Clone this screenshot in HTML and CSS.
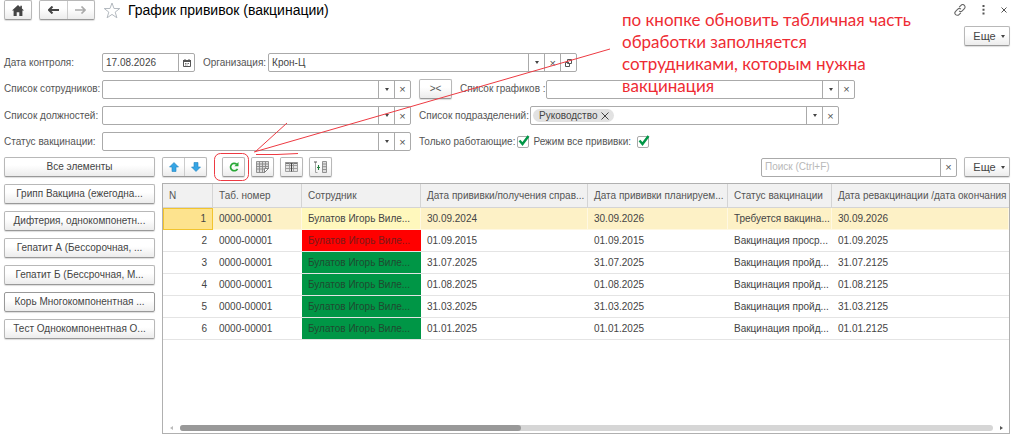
FILE: index.html
```html
<!DOCTYPE html>
<html lang="ru">
<head>
  <meta charset="UTF-8">
  <meta name="viewport" content="width=device-width, initial-scale=1">
  <title>График прививок (вакцинации)</title>
  <link rel="stylesheet" href="styles.css">
</head>
<body>

  <header class="topbar">
    <button class="btn home" type="button" aria-label="Начальная страница">
      <svg width="12" height="11" viewBox="0 0 12 11"><path d="M6 0L0 5.6h1.6V11h3.1V7.2h2.6V11h3.1V5.6H12L9.9 3.6V.8H8.3v1.4z" fill="#444"/></svg>
    </button>
    <div class="btn-group nav">
      <button type="button" aria-label="Назад">
        <svg width="11" height="8" viewBox="0 0 11 8"><path d="M4.5 0.5L1 4l3.500 3.500M1 4h10" fill="none" stroke="#444" stroke-width="2"/></svg>
      </button>
      <button type="button" aria-label="Вперед">
        <svg width="11" height="8" viewBox="0 0 11 8"><path d="M6.500 0.500L10 4 6.500 7.500M10 4H0" fill="none" stroke="#aaa" stroke-width="1.600"/></svg>
      </button>
    </div>
    <svg class="star" width="18" height="17" viewBox="0 0 18 17"><path d="M9 1l2 5.500h5.800l-4.600 3.600 1.700 5.700L9 12.400l-4.900 3.400 1.700-5.700L1.200 6.500H7z" fill="#fff" stroke="#b4bac0"/></svg>
    <h1>График прививок (вакцинации)</h1>
    <div class="window-tools">
      <button type="button" aria-label="Получить ссылку">
        <svg width="12" height="12" viewBox="0 0 12 12"><g fill="none" stroke="#666" stroke-width="1.100"><path d="M5.200 3.200L7 1.400a2.300 2.300 0 0 1 3.400 3.300L8.200 6.900a2.200 2.200 0 0 1-3.100 0"/><path d="M6.800 8.800L5 10.600a2.300 2.300 0 0 1-3.400-3.300l2.200-2.200a2.200 2.200 0 0 1 3.100 0"/></g></svg>
      </button>
      <button type="button" aria-label="Меню">
        <svg width="3" height="10" viewBox="0 0 3 10"><path d="M.5 0h2v2h-2zM.5 3.700h2v2h-2zM.5 7.400h2v2h-2z" fill="#555"/></svg>
      </button>
      <button type="button" aria-label="Закрыть">
        <svg width="6" height="6" viewBox="0 0 6 6"><path d="M.5.5l5 5M5.500.5l-5 5" stroke="#555"/></svg>
      </button>
    </div>
  </header>

  <div class="commands">
    <button class="btn more" type="button">Еще <span class="caret"></span></button>
  </div>

  <form class="filters">
    <div class="row">
      <label class="first" for="date">Дата контроля:</label>
      <div class="field date">
        <input id="date" type="text" value="17.08.2026">
        <button type="button" aria-label="Календарь">
          <svg width="8" height="8" viewBox="0 0 8 8"><path d="M.5 1.500h7v6h-7z" fill="#fff" stroke="#555"/><path d="M0 1h8v2H0zM1.500 0h1v1h-1zM5.500 0h1v1h-1z" fill="#555"/><path d="M2 4h1v1H2zM3.500 4h1v1h-1zM5 4h1v1H5zM2 5.500h1v1H2zM3.500 5.500h1v1h-1z" fill="#777"/></svg>
        </button>
      </div>
      <label for="org">Организация:</label>
      <div class="field">
        <input id="org" type="text" value="Крон-Ц">
        <button type="button" aria-label="Выбрать"><span class="caret"></span></button>
        <button type="button" aria-label="Очистить"><span class="cross">×</span></button>
        <button type="button" aria-label="Открыть">
          <svg width="9" height="8" viewBox="0 0 9 8"><path d="M3.500.5h4v4h-4zM5 3.500H1.500v4h4V4" fill="none" stroke="#555"/></svg>
        </button>
      </div>
    </div>

    <div class="row">
      <label class="first" for="staff">Список сотрудников:</label>
      <div class="field">
        <input id="staff" type="text">
        <button type="button" aria-label="Выбрать"><span class="caret"></span></button>
        <button type="button" aria-label="Очистить"><span class="cross">×</span></button>
      </div>
      <button class="btn swap" type="button">&gt;&lt;</button>
      <label class="schedules" for="schedules">Список графиков :</label>
      <div class="field">
        <input id="schedules" type="text">
        <button type="button" aria-label="Выбрать"><span class="caret"></span></button>
        <button type="button" aria-label="Очистить"><span class="cross">×</span></button>
      </div>
    </div>

    <div class="row">
      <label class="first" for="posts">Список должностей:</label>
      <div class="field">
        <input id="posts" type="text">
        <button type="button" aria-label="Выбрать"><span class="caret"></span></button>
        <button type="button" aria-label="Очистить"><span class="cross">×</span></button>
      </div>
      <label class="departments" for="departments">Список подразделений:</label>
      <div class="field">
        <span class="tag">Руководство <svg width="8" height="8" viewBox="0 0 8 8"><path d="M.5.5l7 7M7.500.5l-7 7" stroke="#444"/></svg></span>
        <input id="departments" type="text">
        <button type="button" aria-label="Выбрать"><span class="caret"></span></button>
        <button type="button" aria-label="Очистить"><span class="cross">×</span></button>
      </div>
    </div>

    <div class="row">
      <label class="first" for="status">Статус вакцинации:</label>
      <div class="field">
        <input id="status" type="text">
        <button type="button" aria-label="Выбрать"><span class="caret"></span></button>
        <button type="button" aria-label="Очистить"><span class="cross">×</span></button>
      </div>
      <label for="working">Только работающие:</label>
      <span class="check">
        <input id="working" type="checkbox" checked>
        <svg width="12" height="11" viewBox="0 0 12 11"><path d="M1.500 5.500l3 3.500L10.500 1" fill="none" stroke="#009646" stroke-width="2.400"/></svg>
      </span>
      <label for="all">Режим все прививки:</label>
      <span class="check">
        <input id="all" type="checkbox" checked>
        <svg width="12" height="11" viewBox="0 0 12 11"><path d="M1.500 5.500l3 3.500L10.500 1" fill="none" stroke="#009646" stroke-width="2.400"/></svg>
      </span>
    </div>
  </form>

  <main class="content">
    <nav class="vaccines">
      <button class="btn" type="button">Все элементы</button>
      <button class="btn" type="button">Грипп Вакцина (ежегодна...</button>
      <button class="btn" type="button">Дифтерия, однокомпонетн...</button>
      <button class="btn" type="button">Гепатит А (Бессорочная, ...</button>
      <button class="btn" type="button">Гепатит Б (Бессрочная, М...</button>
      <button class="btn current" type="button">Корь Многокомпонентная ...</button>
      <button class="btn" type="button">Тест Однокомпонентная О...</button>
    </nav>

    <section class="list">
      <div class="toolbar">
        <div class="btn-group move">
          <button type="button" aria-label="Переместить вверх">
            <svg width="10" height="10" viewBox="0 0 10 10"><path d="M5 .5L9.500 5H7v4.500H3V5H.5z" fill="#35a5e5" stroke="#2484c0" stroke-width=".6"/></svg>
          </button>
          <button type="button" aria-label="Переместить вниз">
            <svg width="10" height="10" viewBox="0 0 10 10"><path d="M5 9.500L.5 5H3V.5h4V5h2.500z" fill="#35a5e5" stroke="#2484c0" stroke-width=".6"/></svg>
          </button>
        </div>
        <button class="btn tool refresh" type="button" aria-label="Обновить">
          <svg width="10" height="10" viewBox="0 0 10 10"><path d="M7.600 2.200A3.700 3.700 0 1 0 8.500 6.800" fill="none" stroke="#2aa838" stroke-width="1.700"/><path d="M9.500 0v4.200H5.300z" fill="#2aa838"/></svg>
        </button>
        <button class="btn tool" type="button" aria-label="Вывести список">
          <svg width="13" height="12" viewBox="0 0 13 12"><path d="M.5.5h12v7l-4 4h-8z" fill="#ddd"/><path d="M.5.5h12v7l-4 4h-8zM.5 3h12M.5 5.500h12M.5 8H8M3.500.5v11M6.500.5v11M9.500.5V7" fill="none" stroke="#888" stroke-width=".9"/><path d="M8.500 11.500v-4h4z" fill="#fff" stroke="#777" stroke-width=".9"/></svg>
        </button>
        <button class="btn tool" type="button" aria-label="Настроить список">
          <svg width="13" height="10" viewBox="0 0 13 10"><path d="M.5.5h12v9H.5z" fill="#e4e4e4"/><path d="M.5 1h12" stroke="#777" stroke-width="2"/><path d="M.5.5h12v9H.5zM.5 3.500h12M.5 6.500h12M4.500.5v9M8.500.5v9" fill="none" stroke="#999" stroke-width=".9"/><path d="M6.500 1v8.500" stroke="#444"/></svg>
        </button>
        <button class="btn tool" type="button" aria-label="Изменить форму">
          <svg width="13" height="12" viewBox="0 0 13 12"><path d="M1.500 1v10.500h2" fill="none" stroke="#999" stroke-width=".9"/><path d="M0 1h3" stroke="#555"/><path d="M4.500 4v5M3 6.500h3" stroke="#258040" stroke-width="1.100"/><path d="M8.500.5h4v11h-4zM8.500 3h4M8.500 5.700h4M8.500 8.500h4" fill="#ddd" stroke="#888" stroke-width=".9"/></svg>
        </button>
        <div class="field search">
          <input type="text" placeholder="Поиск (Ctrl+F)" aria-label="Поиск">
          <button type="button" aria-label="Очистить"><span class="cross">×</span></button>
        </div>
        <button class="btn more" type="button">Еще <span class="caret"></span></button>
      </div>

      <div class="grid">
        <table>
          <colgroup>
            <col class="c-num"><col class="c-tab"><col class="c-name"><col class="c-date"><col class="c-plan"><col class="c-status"><col>
          </colgroup>
          <thead>
            <tr>
              <th>N</th>
              <th>Таб. номер</th>
              <th>Сотрудник</th>
              <th>Дата прививки/получения справ...</th>
              <th>Дата прививки планируем...</th>
              <th>Статус вакцинации</th>
              <th class="last">Дата ревакцинации /дата окончания</th>
            </tr>
          </thead>
          <tbody>
            <tr class="selected">
              <td>1</td><td>0000-00001</td><td>Булатов Игорь Виле...</td><td>30.09.2024</td><td>30.09.2026</td><td>Требуется вакцина...</td><td>30.09.2026</td>
            </tr>
            <tr>
              <td>2</td><td>0000-00001</td><td class="red">Булатов Игорь Виле...</td><td>01.09.2015</td><td>01.09.2015</td><td>Вакцинация проср...</td><td>01.09.2025</td>
            </tr>
            <tr>
              <td>3</td><td>0000-00001</td><td class="green">Булатов Игорь Виле...</td><td>31.07.2025</td><td>31.07.2025</td><td>Вакцинация пройд...</td><td>31.07.2125</td>
            </tr>
            <tr>
              <td>4</td><td>0000-00001</td><td class="green">Булатов Игорь Виле...</td><td>01.08.2025</td><td>01.08.2025</td><td>Вакцинация пройд...</td><td>01.08.2125</td>
            </tr>
            <tr>
              <td>5</td><td>0000-00001</td><td class="green">Булатов Игорь Виле...</td><td>31.03.2025</td><td>31.03.2025</td><td>Вакцинация пройд...</td><td>31.03.2125</td>
            </tr>
            <tr>
              <td>6</td><td>0000-00001</td><td class="green">Булатов Игорь Виле...</td><td>01.01.2025</td><td>01.01.2025</td><td>Вакцинация пройд...</td><td>01.01.2125</td>
            </tr>
          </tbody>
        </table>
        <div class="scrollbar">
          <span class="arrow left"></span>
          <div class="track"><div class="thumb"></div></div>
          <span class="arrow right"></span>
        </div>
      </div>
    </section>
  </main>

  <!-- пояснение поверх формы -->
  <svg class="pointer" width="620" height="190" viewBox="0 0 620 190">
    <g fill="none" stroke="#ed3a42">
      <path d="M610 49L254 152M287 123L255 152M256 154.500L277 154.500 298 153.500"/>
      <rect x="214.500" y="153.500" width="34" height="27" rx="6"/>
    </g>
  </svg>
  <p class="note">по кнопке обновить табличная часть обработки заполняется сотрудниками, которым нужна вакцинация</p>

</body>
</html>
```
FILE: styles.css
```css
* {
  box-sizing: border-box;
}

body {
  margin: 0;
  padding: 0 14px 9px 4px;
  min-height: 100vh;
  display: flex;
  flex-direction: column;
  position: relative;
  background: #fff;
  color: #444;
  font-family: "Liberation Sans", Arial, sans-serif;
  font-size: 10px;
  line-height: 14px;
}

button,
input {
  font: inherit;
  color: inherit;
  margin: 0;
  padding: 0;
}

button {
  display: flex;
  align-items: center;
  justify-content: center;
  border: 0;
  background: none;
  white-space: nowrap;
}

.btn,
.btn-group {
  height: 20px;
  border: 1px solid #b8b8b8;
  border-bottom-color: #999;
  border-radius: 2px;
  background: linear-gradient(#fff 40%, #ececec);
  box-shadow: 0 1px 1px #ddd;
}

.btn-group {
  display: flex;
}

.btn-group button {
  flex: 1;
}

.btn-group button + button {
  border-left: 1px solid #ccc;
}

.caret {
  border: 2px solid transparent;
  border-top: 3px solid #444;
  border-bottom: 0;
}

.cross {
  color: #555;
  font-size: 11px;
  line-height: 12px;
}

/* Шапка */
.topbar {
  display: flex;
  align-items: center;
  height: 20px;
}

.home {
  width: 28px;
  margin-right: 7px;
}

.nav {
  width: 56px;
}

.star {
  margin: 0 7px 0 8px;
}

h1 {
  margin: 0;
  color: #000;
  font-size: 14px;
  font-weight: normal;
  line-height: 20px;
}

.window-tools {
  display: flex;
  gap: 16px;
  margin-left: auto;
  padding-right: 3px;
}

.commands {
  display: flex;
  justify-content: flex-end;
  margin: 6px 0 7px;
}

.more {
  width: 46px;
  gap: 5px;
  padding-left: 4px;
  font-size: 11px;
}

/* Отборы */
.filters {
  display: flex;
  flex-direction: column;
  gap: 7px;
  margin-bottom: 6px;
}

.row {
  display: flex;
  align-items: center;
  color: #555;
}

.row label {
  margin: 0 2px 0 8px;
  white-space: nowrap;
}

.row label.first {
  width: 98px;
  margin: 0;
}

.row .check + label {
  margin: 0 6px 0 4px;
}

.field {
  display: flex;
  width: 309px;
  height: 19px;
  border: 1px solid #aaa;
  border-radius: 2px;
  background: #fff;
  color: #444;
}

.field input {
  flex: 1;
  min-width: 0;
  padding-left: 3px;
  border: 0;
  outline: 0;
  background: none;
}

.field button {
  width: 16px;
  border-left: 1px solid #aaa;
}

.date {
  width: 93px;
}

.swap {
  width: 33px;
  margin-left: 8px;
}

.row .schedules {
  width: 84px;
}

.row .departments {
  width: 109px;
}

.tag {
  display: flex;
  align-items: center;
  gap: 4px;
  height: 13px;
  margin: 2px;
  padding: 0 5px 0 6px;
  border-radius: 7px;
  background: #e2e2e2;
}

.check {
  display: flex;
  position: relative;
}

.check input {
  appearance: none;
  width: 12px;
  height: 12px;
  border: 1px solid #aaa;
  border-radius: 2px;
}

.check svg {
  position: absolute;
  left: 1px;
  top: -1px;
  pointer-events: none;
}

/* Список вакцин и таблица */
.content {
  flex: 1;
  display: flex;
  gap: 7px;
}

.vaccines {
  display: flex;
  flex-direction: column;
  gap: 7px;
  width: 151px;
}

.vaccines .current {
  border-color: #999;
}

.list {
  flex: 1;
  min-width: 0;
  display: flex;
  flex-direction: column;
}

.toolbar {
  display: flex;
  align-items: center;
  margin-bottom: 6px;
}

.move {
  width: 45px;
}

.tool {
  width: 23px;
  margin-right: 6px;
}

.refresh {
  margin-left: 15px;
}

.search {
  width: 196px;
  margin: 0 7px 0 auto;
}

.search input::placeholder {
  color: #b8b8b8;
}

.grid {
  flex: 1;
  display: flex;
  flex-direction: column;
  border: 1px solid #b0b0b0;
}

table {
  width: 100%;
  table-layout: fixed;
  border-collapse: separate;
  border-spacing: 0;
}

.c-num { width: 50px; }
.c-tab { width: 89px; }
.c-name { width: 119px; }
.c-date { width: 167px; }
.c-plan { width: 140px; }
.c-status { width: 104px; }

th,
td {
  padding: 0 0 0 6px;
  overflow: hidden;
  text-align: left;
  font-weight: normal;
  white-space: nowrap;
}

th {
  height: 24px;
  border-right: 1px solid #d4d4d4;
  border-bottom: 1px solid #d4d4d4;
  background: #f1f1f1;
  color: #555;
}

th.last {
  border-right: 0;
}

td {
  height: 22px;
  border-bottom: 1px solid #e4e4e4;
}

td:first-child {
  padding-right: 6px;
  text-align: right;
}

.selected td {
  border-right: 1px solid #fff8e2;
  border-bottom-color: #fff8e2;
  background: #fdf1c6;
}

.selected td:first-child {
  border: 1px solid #f2c42e;
  background: #fde38e;
}

.selected td:nth-child(3) {
  background: #fff8bd;
}

.red {
  background: #f00;
  color: #7a1a1a;
}

.green {
  background: #009646;
  color: #1f4a30;
}

.scrollbar {
  display: flex;
  align-items: center;
  gap: 7px;
  margin-top: auto;
  padding: 0 6px 2px 7px;
}

.track {
  flex: 1;
  height: 6px;
  border-radius: 3px;
  background: #d6d6d6;
}

.thumb {
  width: 42%;
  height: 6px;
  border-radius: 3px;
  background: #999;
}

.arrow {
  border: 2px solid transparent;
}

.arrow.left {
  border-left: 0;
  border-right: 3px solid #bbb;
}

.arrow.right {
  border-right: 0;
  border-left: 3px solid #555;
}

/* Пояснение */
.pointer {
  position: absolute;
  left: 0;
  top: 0;
  pointer-events: none;
}

.note {
  position: absolute;
  left: 622px;
  top: 9px;
  width: 300px;
  margin: 0;
  color: #ee2b33;
  font-family: Lato, "Open Sans", sans-serif;
  font-size: 17px;
  line-height: 22px;
  pointer-events: none;
}
```
